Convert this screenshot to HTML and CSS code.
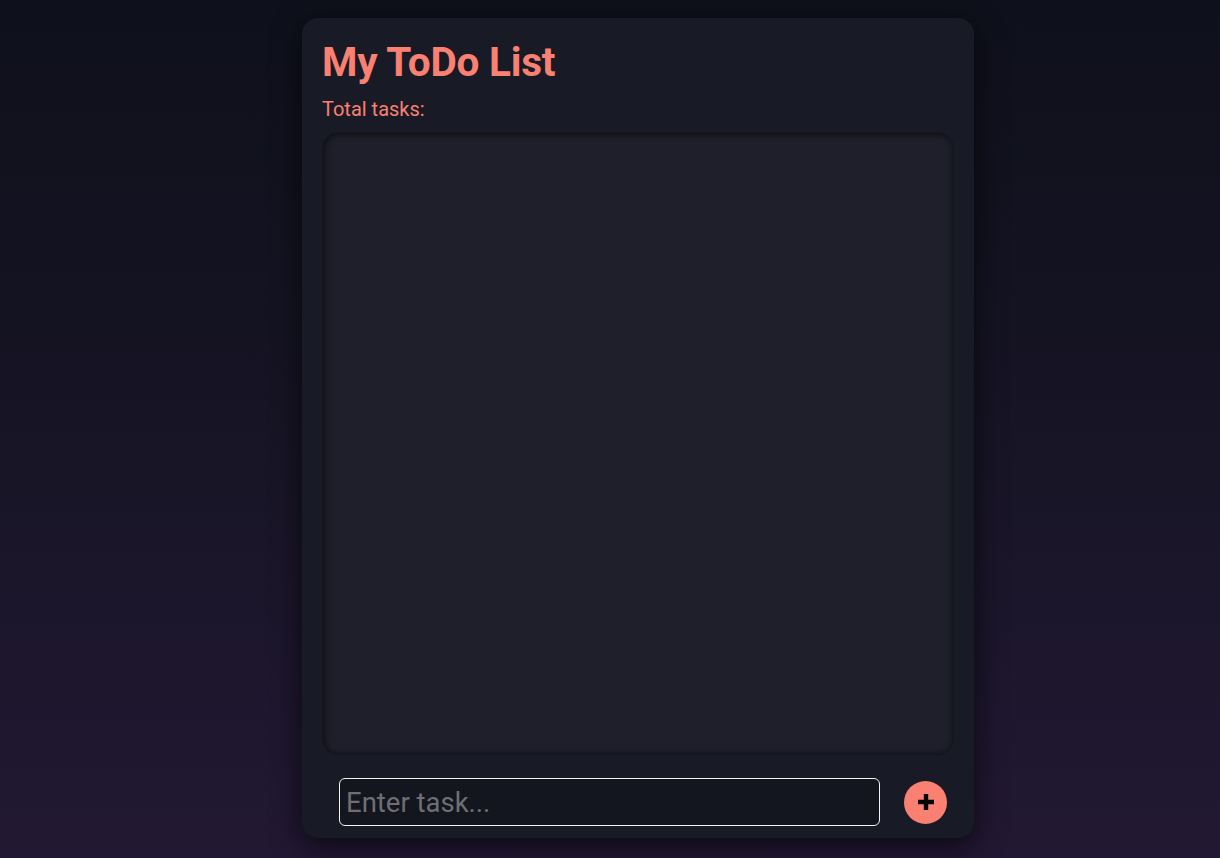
FILE: index.html
```html
<!DOCTYPE html>
<html lang="en">
<head>
<meta charset="utf-8">
<title>My ToDo List</title>
<link rel="stylesheet" href="styles.css">
</head>
<body>
<main class="card">
  <h1 class="title">My ToDo List</h1>
  <p class="count">Total tasks:</p>
  <ul class="list"></ul>
  <form class="add-row" onsubmit="return false">
    <input class="task-input" type="text" placeholder="Enter task...">
    <button class="add-btn" type="submit" aria-label="Add task">
      <svg width="20" height="20" viewBox="0 0 20 20"><path d="M10 2v16M2 10h16" stroke="#000" stroke-width="4.4" fill="none"/></svg>
    </button>
  </form>
</main>
</body>
</html>
```

FILE: styles.css
```css
* { box-sizing: border-box; }
html, body { height: 100%; }
body {
  margin: 0;
  min-height: 858px;
  background: linear-gradient(to bottom, #0e101b 0%, #161424 45%, #221833 100%);
  font-family: Roboto, "Noto Sans", sans-serif;
  display: flex;
  justify-content: center;
  align-items: flex-start;
  padding: 18px 0 0 56px;
}
.card {
  width: 672px;
  height: 820px;
  flex-shrink: 0;
  background: #181a25;
  border-radius: 16px;
  padding: 20px 20px 12px 20px;
  box-shadow: 0 8px 30px rgba(0,0,0,0.65);
  display: flex;
  flex-direction: column;
}
.title {
  margin: 0;
  font-size: 40.5px;
  font-weight: 700;
  color: #fa8072;
  line-height: 48px;
  letter-spacing: -0.2px;
}
.count {
  margin: 11px 0 0 0;
  font-size: 20px;
  line-height: 24px;
  color: #fa8072;
}
.list {
  margin: 11px 0 0 0;
  padding: 0;
  list-style: none;
  height: 623px;
  background: #1e1f2a;
  border-radius: 16px;
  border: 1px solid #14151e;
  box-shadow: inset 2px 2px 6px rgba(0,0,0,0.45), inset -1px -1px 4px rgba(0,0,0,0.25);
}
.add-row {
  display: flex;
  align-items: center;
  gap: 24px;
  margin-top: 23px;
  padding: 0 7px 0 17px;
}
.task-input {
  flex: 1;
  height: 48px;
  border: 1px solid #f2f2f2;
  border-radius: 6px;
  background: #13151f;
  color: #ddd;
  font-family: Roboto, "Noto Sans", sans-serif;
  font-size: 27.5px;
  padding: 0 6px;
  outline: none;
}
.task-input::placeholder { color: #6f6f73; }
.add-btn {
  width: 43px;
  height: 43px;
  border-radius: 50%;
  border: none;
  background: #fa8072;
  display: flex;
  align-items: center;
  justify-content: center;
  padding: 0;
  cursor: pointer;
}
```
